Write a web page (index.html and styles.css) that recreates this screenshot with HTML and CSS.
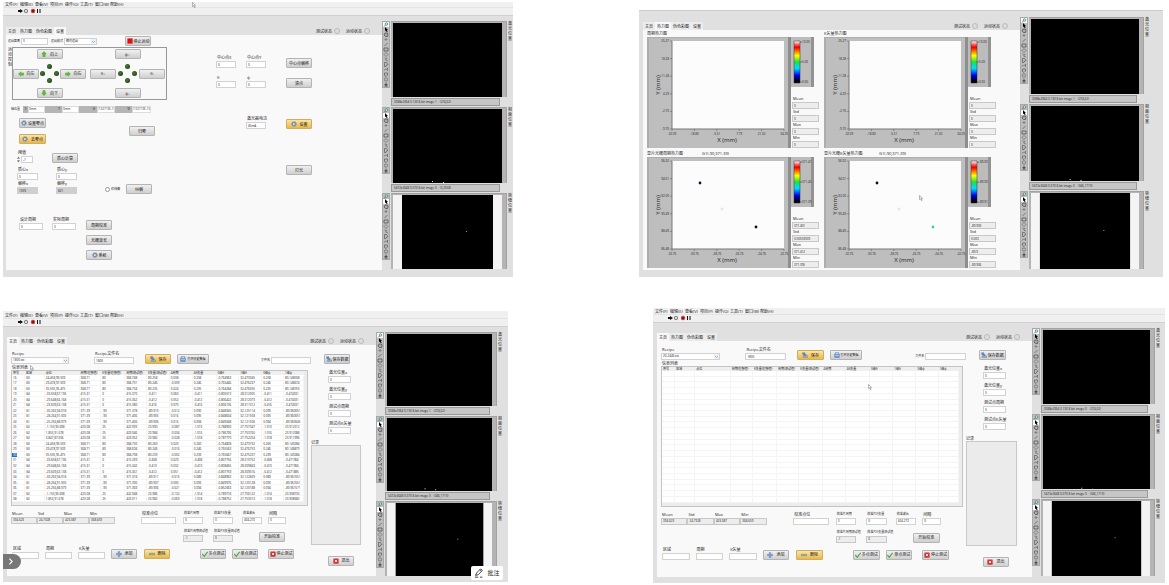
FILE: index.html
```html
<!DOCTYPE html>
<html>
<head>
<meta charset="utf-8">
<title>光栅测试系统</title>
<link rel="stylesheet" href="styles.css">
</head>
<body>
<svg class="sprite" aria-hidden="true">
  <symbol id="i-gear" viewBox="0 0 16 16"><circle cx="8" cy="8" r="5" fill="#dfe6f2" stroke="#5b7099" stroke-width="2.4"/><circle cx="8" cy="8" r="7" fill="none" stroke="#7187ad" stroke-width="1.8" stroke-dasharray="2.2 2.2"/><path d="M8 5v3l2 1" stroke="#5b7099" stroke-width="1.4" fill="none"/></symbol>
  <symbol id="i-up" viewBox="0 0 16 16"><path d="M8 1l6 7h-3v7H5V8H2z" fill="#62bd35" stroke="#3f8f1e"/></symbol>
  <symbol id="i-down" viewBox="0 0 16 16"><path d="M8 15l6-7h-3V1H5v7H2z" fill="#62bd35" stroke="#3f8f1e"/></symbol>
  <symbol id="i-left" viewBox="0 0 16 16"><path d="M1 8l7-6v3h7v6H8v3z" fill="#62bd35" stroke="#4fa02b"/></symbol>
  <symbol id="i-right" viewBox="0 0 16 16"><path d="M15 8L8 2v3H1v6h7v3z" fill="#62bd35" stroke="#4fa02b"/></symbol>
  <symbol id="i-stop" viewBox="0 0 16 16"><path d="M1 1h14v14H1z" fill="#e01010"/></symbol>
  <symbol id="i-save" viewBox="0 0 16 16"><path d="M3 10h12v5H3z" fill="#a9b4c4" stroke="#66748a"/><path d="M1 2l6-1 1 4 4 2-4 5-2-4-4-1z" fill="#4f86d0" stroke="#3a6cae" stroke-width=".6"/></symbol>
  <symbol id="i-open" viewBox="0 0 16 16"><path d="M4 5V1h8v4" fill="#eef3fa" stroke="#4a78b5" stroke-width="1.5"/><path d="M1 5h14l-1 10H2z" fill="#6f9ed8" stroke="#4a78b5"/><path d="M3 9h10" stroke="#dce8f7" stroke-width="1.5"/></symbol>
  <symbol id="i-plus" viewBox="0 0 16 16"><path d="M6 1h4v5h5v4h-5v5H6v-5H1V6h5z" fill="#7ea3d6" stroke="#4d75ae"/></symbol>
  <symbol id="i-minus" viewBox="0 0 16 16"><path d="M0 6h16v4H0z" fill="#86a3bd" stroke="#6d879e"/></symbol>
  <symbol id="i-check" viewBox="0 0 16 16"><path d="M1 8l5 6L15 2" fill="none" stroke="#3faa35" stroke-width="3"/></symbol>
  <symbol id="i-cross" viewBox="0 0 16 16"><rect x="1" y="1" width="14" height="14" rx="1" fill="#d32f2f"/><path d="M5 5l6 6M11 5l-6 6" stroke="#fff" stroke-width="2.2"/></symbol>
  <symbol id="i-cursor" viewBox="0 0 10 16"><path d="M1 1v11l3-2 2 5 2-1-2-5h3z" fill="#fff" stroke="#444"/></symbol>
  <symbol id="t-zoom" viewBox="0 0 10 10"><circle cx="6" cy="4" r="2.6" fill="#cfe9ec" stroke="#27616b" stroke-width="1.2"/><path d="M4 6L1 9" stroke="#27616b" stroke-width="1.6"/></symbol>
  <symbol id="t-point" viewBox="0 0 10 10"><path d="M3 0v8l2-1 1 3h2L7 6h2z" fill="#000"/></symbol>
  <symbol id="t-hand" viewBox="0 0 10 10"><path d="M2 4l1-2h5l1 3-1 4H4L1 6z" fill="#aaa" stroke="#333" stroke-width="1.2"/></symbol>
  <symbol id="t-plus" viewBox="0 0 10 10"><path d="M5 2v6M2 5h6" stroke="#555"/></symbol>
  <symbol id="t-line" viewBox="0 0 10 10"><path d="M2 8l6-6" stroke="#444" stroke-width="1.2"/></symbol>
  <symbol id="t-rect" viewBox="0 0 10 10"><path d="M1 2h8v6H1z" fill="none" stroke="#333" stroke-width="1.2"/></symbol>
  <symbol id="t-diam" viewBox="0 0 10 10"><path d="M5 1l4 4-4 4-4-4z" fill="none" stroke="#444"/></symbol>
  <symbol id="t-poly" viewBox="0 0 10 10"><path d="M2 2l5 1-3 3 5 2" fill="none" stroke="#444"/></symbol>
  <symbol id="t-gon" viewBox="0 0 10 10"><path d="M2 1h4l3 4-3 1-1 3H2z" fill="none" stroke="#333"/></symbol>
  <symbol id="t-free" viewBox="0 0 10 10"><path d="M1 7c2-6 5 2 7-5v6" fill="none" stroke="#444"/></symbol>
  <symbol id="t-blob" viewBox="0 0 10 10"><path d="M2 2h6v4L5 9 2 7z" fill="none" stroke="#333"/></symbol>
  <symbol id="t-ring" viewBox="0 0 10 10"><circle cx="5" cy="5" r="3.3" fill="none" stroke="#444"/></symbol>
  <symbol id="t-fill" viewBox="0 0 10 10"><path d="M5 1v8M2 5h6M2 8h6" stroke="#333" stroke-width="1.4"/></symbol>
</svg>

<template id="menu-tpl">
  <nav class="menubar">
    <a href="#">文件(F)</a><a href="#">编辑(E)</a><a href="#">查看(V)</a><a href="#">项目(P)</a><a href="#">操作(O)</a><a href="#">工具(T)</a><a href="#">窗口(W)</a><a href="#">帮助(H)</a>
  </nav>
  <svg class="runbar" viewBox="0 0 26 6" aria-hidden="true">
    <path d="M0 2h2V1l3 2-3 2V4H0z" fill="#111"/><circle cx="8" cy="3" r="1.7" fill="#ddd" stroke="#555" stroke-width=".7"/><circle cx="15" cy="3" r="2.2" fill="#c4413c"/><path d="M14 2h2v2h-2z" fill="#7b1a17"/><path d="M19.500 1v4M22 1v4" stroke="#111"/>
  </svg>
</template>

<template id="tabs-tpl">
  <button class="tab" type="button">主页</button><button class="tab" type="button">热力图</button><button class="tab" type="button">伪色彩图</button><button class="tab" type="button">设置</button>
  <span class="lamp">测试状态<i></i></span><span class="lamp">运动状态<i></i></span>
</template>

<template id="recipe-tpl">
  <div class="track files">
    <label class="field"><span>Recipe</span><select><option></option></select></label>
    <label class="field"><span>Recipe文件名</span><input value="1800"></label>
    <button class="btn gold" type="button"><svg><use href="#i-save"/></svg>保存</button>
    <button class="btn dense" type="button"><svg><use href="#i-open"/></svg>打开历史数据</button>
    <label class="inline"><span>文件名</span><input></label>
    <button class="btn" type="button"><svg><use href="#i-save"/></svg>保存数据</button>
  </div>
  <div class="recipe-body">
    <div class="recipe-left">
      <span class="list-title">信息列表</span>
      <div class="list"><table><colgroup></colgroup><thead><tr></tr></thead><tbody></tbody></table></div>
      <div class="track results">
        <label class="field ro"><span>Mean</span><input value="394.623" readonly></label>
        <label class="field ro"><span>Std</span><input value="24.7328" readonly></label>
        <label class="field ro"><span>Max</span><input value="423.087" readonly></label>
        <label class="field ro"><span>Min</span><input value="368.659" readonly></label>
        <label class="field"><span>校准点位</span><input></label>
        <label class="field small"><span>校准片周期</span><input value="0"></label>
        <label class="field small"><span>校准片K矢量</span><input value="0"></label>
        <label class="field small"><span>校准波长</span><input value="404.272"></label>
        <label class="field"><span>间隔</span><input value="0"></label>
      </div>
      <div class="track calib">
        <label class="field ro small"><span>校准片周期测试值</span><input value="-1" readonly></label>
        <label class="field ro small"><span>校准片K矢量测试值</span><input value="0" readonly></label>
        <button class="btn" type="button">开始校准</button>
      </div>
      <div class="track actions">
        <label class="field"><span>区域</span><input></label>
        <label class="field"><span>周期</span><input></label>
        <label class="field"><span>K矢量</span><input></label>
        <button class="btn" type="button"><svg><use href="#i-plus"/></svg>添加</button>
        <button class="btn gold" type="button"><svg><use href="#i-minus"/></svg>删除</button>
        <button class="btn" type="button"><svg><use href="#i-check"/></svg>多点测试</button>
        <button class="btn" type="button"><svg><use href="#i-check"/></svg>单点测试</button>
        <button class="btn" type="button"><svg><use href="#i-cross"/></svg>停止测试</button>
      </div>
    </div>
    <div class="recipe-right">
      <label class="field"><span>激光位置x</span><input value="0"></label>
      <label class="field"><span>激光位置y</span><input value="0"></label>
      <label class="field"><span>测试点周期</span><input value="0"></label>
      <label class="field"><span>测试点K矢量</span><input value="0"></label>
      <label class="log"><span>记录</span><textarea readonly></textarea></label>
      <button class="btn" type="button"><svg><use href="#i-cross"/></svg>退出</button>
    </div>
  </div>
</template>

<main class="board">
  <div class="row row-top">
    <section class="panel p-setup">
      <header class="chrome" data-menu></header>
      <div class="work">
        <div class="tabbar" data-active="3"></div>
        <div class="page setup">
          <div class="setup-left">
            <div class="track s-move">
              <label class="inline"><span>运动距离</span><input value="0"></label>
              <label class="inline"><span>运动模式</span><select><option>相对运动</option></select></label>
              <button class="btn" type="button"><svg><use href="#i-stop"/></svg>停止运动</button>
            </div>
            <div class="track s-pad">
              <span class="vertical">运动控制</span>
              <div class="pads">
                <div class="pad">
                  <button class="btn n" type="button"><svg><use href="#i-up"/></svg>向上</button>
                  <button class="btn w" type="button"><svg><use href="#i-left"/></svg>向左</button>
                  <span class="leds"><i></i><i></i><i></i><i></i></span>
                  <button class="btn e" type="button"><svg><use href="#i-right"/></svg>向右</button>
                  <button class="btn s" type="button"><svg><use href="#i-down"/></svg>向下</button>
                </div>
                <div class="pad">
                  <button class="btn n" type="button">ψ+</button>
                  <button class="btn w" type="button">θ+</button>
                  <span class="leds"><i></i><i></i><i></i><i></i></span>
                  <button class="btn e" type="button">θ-</button>
                  <button class="btn s" type="button">ψ-</button>
                </div>
              </div>
            </div>
            <div class="axes">
              <span>轴位置</span><b class="first">X</b><output>0mm</output><b>Y</b><output>0mm</output><b>Θ</b><output>7.02713E-15</output><b>Ψ</b><output>7.02713E-15</output>
            </div>
            <div class="track s-zero">
              <div class="stack">
                <button class="btn" type="button"><svg><use href="#i-gear"/></svg>设置零点</button>
                <button class="btn gold" type="button"><svg><use href="#i-gear"/></svg>去零点</button>
              </div>
              <button class="btn" type="button">归零</button>
            </div>
            <div class="track s-thr">
              <label class="field"><span>阈值</span><i class="spin"><svg viewBox="0 0 4 8"><path d="M0 3l2-3 2 3zM0 5l2 3 2-3z" fill="#777"/></svg><input value="-1"></i></label>
              <button class="btn" type="button">质心计算</button>
            </div>
            <div class="track s-cent">
              <div><label class="field"><span>质心x</span><input value="0"></label><label class="field dark"><span>偏移x</span><input value="1359" readonly></label></div>
              <div><label class="field"><span>质心y</span><input value="0"></label><label class="field dark"><span>偏移y</span><input value="821" readonly></label></div>
              <label class="radio"><input type="radio">仿线偏</label>
              <button class="btn" type="button">纠偏</button>
            </div>
            <div class="track s-period">
              <label class="field"><span>设计周期</span><input value="0"></label>
              <label class="field"><span>实际周期</span><input value="0"></label>
              <div class="stack">
                <button class="btn" type="button">周期校准</button>
                <button class="btn" type="button">光栅波长</button>
                <button class="btn" type="button"><svg><use href="#i-gear"/></svg>系统</button>
              </div>
            </div>
          </div>
          <div class="setup-right">
            <div class="track">
              <label class="field"><span>中心点X</span><input value="0"></label>
              <label class="field"><span>中心点Y</span><input value="0"></label>
              <button class="btn" type="button">中心点偏移</button>
            </div>
            <div class="track">
              <label class="field"><span>θ</span><input value="0"></label>
              <label class="field"><span>ψ</span><input value="0"></label>
              <button class="btn" type="button">清点</button>
            </div>
            <div class="track laser">
              <label class="field"><span>激光器电流</span><input value="45mA"></label>
              <button class="btn gold" type="button"><svg><use href="#i-gear"/></svg>设置</button>
            </div>
            <div class="track light"><button class="btn" type="button">灯光</button></div>
          </div>
        </div>
      </div>
      <aside class="cams" data-status="3088x2064 0.13X 8-bit image 1    (274,62)|5472x3648 0.07X 8-bit image 0    (0,2358)"></aside>
      <svg class="cursor"><use href="#i-cursor"/></svg>
    </section>

    <section class="panel p-heat">
      <div class="work">
        <div class="tabbar" data-active="1"></div>
        <div class="page heat"></div>
      </div>
      <aside class="cams" data-status="3088x2064 0.13X 8-bit image 1    (274,62)|5472x3648 0.07X 8-bit image 0    (346,1719)"></aside>
      <svg class="cursor"><use href="#i-cursor"/></svg>
    </section>
  </div>

  <div class="row row-bottom">
    <section class="panel p-full">
      <header class="chrome" data-menu></header>
      <div class="work">
        <div class="tabbar" data-active="0"></div>
        <div class="page recipe" data-recipe="1800.txt" data-rows="full"></div>
      </div>
      <aside class="cams" data-status="3088x2064 0.13X 8-bit image 1    (274,62)|5472x3648 0.07X 8-bit image 0    (346,1719)"></aside>
      <svg class="cursor"><use href="#i-cursor"/></svg>
      <button class="expand" type="button" aria-label="展开"><svg viewBox="0 0 8 8"><path d="M3 1.500l2.500 2.500L3 6.500" fill="none" stroke="#fff"/></svg></button>
      <button class="note" type="button"><svg viewBox="0 0 12 12"><path d="M2 9l1-3 5-5 2 2-5 5zM7 2l2 2M1 11h4M7 11h3" fill="none" stroke="#222"/></svg>批注</button>
    </section>

    <section class="panel p-empty">
      <header class="chrome" data-menu></header>
      <div class="work">
        <div class="tabbar" data-active="0"></div>
        <div class="page recipe" data-recipe="20-2440.txt" data-rows="none"></div>
      </div>
      <aside class="cams" data-status="3088x2064 0.13X 8-bit image 0    (274,62)|5472x3648 0.07X 8-bit image 0    (346,1719)"></aside>
      <svg class="cursor"><use href="#i-cursor"/></svg>
    </section>
  </div>
</main>
<script src="script.js"></script>
</body>
</html>
```
FILE: styles.css
```css
* { box-sizing: border-box; }
body {
  margin: 0;
  background: #fff;
  color: #222;
  font: 4px/5px "Open Sans", "Noto Sans CJK SC", sans-serif;
}
.sprite { position: absolute; width: 0; height: 0; }
button, input, select, textarea {
  margin: 0;
  font: inherit;
  color: inherit;
  border-radius: 0;
  appearance: none;
}
a { color: inherit; text-decoration: none; }

/* board */
.board { display: grid; min-height: 100vh; grid-template-rows: 307fr 278fr; }
.row { display: grid; }
.row-top { grid-template-columns: 510fr 126fr 524fr; padding: 2px 6px 31px 3px; }
.row-bottom { grid-template-columns: 505fr 145fr 512fr; padding: 0 4px 4px 3px; }
.panel {
  position: relative;
  display: grid;
  background: #e0e0e0;
  grid-template-rows: auto 1fr;
  min-width: 0;
}
.panel:last-child { grid-column: 3; }
.p-setup { grid-template-columns: minmax(0, 379fr) minmax(0, 131fr); }
.p-heat { grid-template-columns: minmax(0, 381fr) minmax(0, 143fr); grid-template-rows: 1fr; margin-top: 8px; border-top: 1px solid #c8cccc; }
.p-full { grid-template-columns: minmax(0, 373fr) minmax(0, 132fr); margin: 3px 0 1px; }
.p-empty { grid-template-columns: minmax(0, 379fr) minmax(0, 133fr); }

.chrome {
  grid-column: 1 / 3;
  background: #f0f0f0;
  border-bottom: 1px solid #d0d0d0;
  height: 14px;
}
.p-full .chrome { height: 16px; padding-top: 2px; }
.p-empty .chrome { height: 15px; padding-top: 1px; }
.menubar { display: flex; gap: 2px; padding-left: 2px; height: 6px; border-bottom: 1px solid #e4e4e4; }
.menubar a { width: 13px; white-space: nowrap; }
.runbar { display: block; width: 26px; height: 6px; margin-left: 15px; }

.work { display: flex; flex-direction: column; padding: 0 0 7px 3px; }
.p-heat .work, .p-full .work, .p-empty .work { padding-left: 4px; }
.p-full .work, .p-empty .work { padding-bottom: 6px; }
.tabbar { display: flex; align-items: flex-end; height: 19px; padding-right: 12px; }
.p-full .tabbar, .p-empty .tabbar { height: 18px; }
.tab { height: 8px; padding: 0 2px; border: 0; background: #ececec; white-space: nowrap; }
.tab.on { background: #f9f9f9; }
.lamp { display: flex; align-items: center; gap: 2px; height: 8px; margin-left: 6px; white-space: nowrap; }
.tab + .lamp { margin-left: auto; }
.lamp i { width: 6px; height: 6px; border: 1px solid #bbb; border-radius: 50%; background: #ddd; }
.page { flex: 1; background: #f9f9f9; }

/* tracks: even columns hold items, odd columns are the gaps */
.track { display: grid; align-items: end; }
.track > * { grid-row: 1; min-width: 0; }
.track > :nth-child(1) { grid-column: 2; }
.track > :nth-child(2) { grid-column: 4; }
.track > :nth-child(3) { grid-column: 6; }
.track > :nth-child(4) { grid-column: 8; }
.track > :nth-child(5) { grid-column: 10; }
.track > :nth-child(6) { grid-column: 12; }
.track > :nth-child(7) { grid-column: 14; }
.track > :nth-child(8) { grid-column: 16; }
.track > :nth-child(9) { grid-column: 18; }

/* controls */
.field { display: block; white-space: nowrap; }
.field span { display: block; height: 6px; padding-left: 1px; }
.small span { font-size: 3px; }
input, select {
  display: block;
  width: 100%;
  min-width: 0;
  height: 7px;
  padding: 0 1px;
  border: 1px solid #d2d2d2;
  background: #fff;
  color: #111;
  font-size: 3px;
  line-height: 5px;
}
.ro input { background: #ededed; border-color: #c8c8c8; }
.dark input { background: #cfcfcf; border-color: #cfcfcf; }
.inline { display: flex; align-items: center; gap: 1px; white-space: nowrap; font-size: 3px; }
.inline input, .inline select { flex: 1; }
.spin { display: flex; align-items: center; gap: 1px; }
.spin svg { width: 3px; height: 7px; flex: none; }
select {
  background: #fff url("data:image/svg+xml,%3Csvg xmlns='http://www.w3.org/2000/svg' viewBox='0 0 5 5'%3E%3Cpath d='M0 0h5v5H0z' fill='%23eaf1f7'/%3E%3Cpath d='M1 2l1.500 1.500L4 2' fill='none' stroke='%23789' stroke-width='.6'/%3E%3C/svg%3E") no-repeat right center / 5px 5px;
}
.btn {
  display: flex;
  align-items: center;
  justify-content: center;
  gap: 1px;
  height: 10px;
  width: 100%;
  padding: 0;
  border: 1px solid #b4b4b4;
  border-radius: 1px;
  background: linear-gradient(#f0f0f0, #cfcfcf);
  white-space: nowrap;
  color: #111;
}
.btn svg { width: 6px; height: 6px; flex: none; }
.actions .btn:nth-child(-n+5), .pad .btn, .gold, .recipe-right .btn { gap: 3px; }
.dense { font-size: 3px; }
.gold { background: linear-gradient(#fbe4a4, #e6b94d); border-color: #cfae62; }
.vertical { width: 4px; line-height: 5px; word-break: break-all; align-self: start; }
.stack { display: grid; gap: 6px; }

/* setup page */
.setup { display: grid; grid-template-columns: minmax(0, 207fr) minmax(0, 169fr); }
.s-move { grid-template-columns: 2fr 40fr 3fr 46fr 28fr 26fr 62fr; padding-top: 1px; align-items: center; }
.s-pad { grid-template-columns: 2fr 4fr 0fr 155fr 46fr; margin-top: 1px; }
.pads { display: grid; grid-template-columns: 73px 75px; justify-content: space-between; padding: 1px 1px 1px 0; border: 1px solid #999; height: 53px; align-content: center; }
.pad { display: grid; grid-template-columns: 26px 1fr 26px; grid-template-rows: 10px 29px 10px; align-items: center; }
.pad .n { grid-area: 1 / 1 / 2 / 4; }
.pad .s { grid-area: 3 / 1 / 4 / 4; }
.pad .n, .pad .s { width: 26px; justify-self: center; }
.pad .w { grid-area: 2 / 1; }
.pad .e { grid-area: 2 / 3; }
.leds { grid-area: 2 / 2; justify-self: center; display: grid; grid-template: repeat(3, 5px) / repeat(3, 5px); gap: 2px; }
.leds i { border-radius: 50%; background: radial-gradient(circle at 2px 2px, #4a7a3a, #123008); }
.leds i:nth-child(1) { grid-area: 1 / 2; }
.leds i:nth-child(2) { grid-area: 2 / 1; }
.leds i:nth-child(3) { grid-area: 2 / 3; }
.leds i:nth-child(4) { grid-area: 3 / 2; }
.axes { display: grid; grid-template-columns: 12fr 5fr 17fr 17fr 17fr 18fr 18fr 17fr 19fr; margin: 6px 62px 0 5px; font-size: 3px; line-height: 7px; white-space: nowrap; }
.axes > * { min-width: 0; }
.axes b { background: #b5b5b5; text-align: right; padding-right: 2px; font-weight: 400; }
.axes .first { text-align: center; padding: 0; }
.axes output { background: #fff; border: 1px solid #ddd; line-height: 5px; overflow: hidden; }
.s-zero { grid-template-columns: 13fr 27fr 83fr 26fr 58fr; margin-top: 5px; align-items: center; }
.s-thr { grid-template-columns: 11fr 16fr 19fr 26fr 135fr; margin-top: 6px; }
.s-cent { grid-template-columns: 11fr 21fr 18fr 21fr 28fr 17fr 4fr 26fr 61fr; margin-top: 4px; }
.s-cent .field + .field { margin-top: 1px; }
.radio { display: flex; align-items: center; gap: 1px; font-size: 3px; height: 10px; white-space: nowrap; }
.radio input { flex: none; width: 5px; height: 5px; padding: 0; border: 1px solid #999; border-radius: 50%; }
.s-period { grid-template-columns: 13fr 24fr 9fr 24fr 10fr 26fr 101fr; margin-top: 23px; align-items: start; }
.s-period .stack { margin-top: 3px; gap: 5px; }
.setup-right .track { grid-template-columns: 3fr 20fr 10fr 20fr 20fr 26fr 70fr; margin-top: 7px; }
.setup-right .track:first-child { margin-top: 20px; }
.setup-right .laser { margin-top: 28px; }
.setup-right .laser > :nth-child(1) { grid-column: 4; }
.setup-right .laser > :nth-child(2), .setup-right .light > * { grid-column: 6; }
.setup-right .light { margin-top: 36px; }

/* heat maps */
.heat { display: grid; align-content: space-between; padding: 1px 0 2px; }
.heat .track { grid-template-columns: 4fr 144fr 0fr 29fr 0fr 4fr 0fr 144fr 0fr 29fr 23fr; align-items: stretch; }
.heat .track > :nth-child(3) { grid-column: 8; }
.heat .track > :nth-child(4) { grid-column: 10; }
.plot { display: flex; flex-direction: column; }
.plot p { display: grid; grid-template-columns: 55fr 89fr; margin: 0; height: 6px; white-space: nowrap; }
.plot p span { min-width: 0; }
.plot svg, .scale svg { display: block; width: 100%; }
svg text { fill: #222; font-size: 3px; }
svg .axis { font-size: 6px; }
.scale { display: flex; flex-direction: column; padding-top: 6px; }
.scale svg { width: 23px; height: 50px; }
.scale .values { margin-top: auto; padding: 0 1px; }

/* recipe page */
.recipe { display: flex; flex-direction: column; }
.files { grid-template-columns: 4fr 58fr 25fr 40fr 11fr 26fr 6fr 32fr 52fr 50fr 13fr 26fr 26fr; padding-top: 4px; height: 19px; }
.recipe-body { flex: 1; display: grid; grid-template-columns: minmax(0, 304fr) minmax(0, 65fr); }
.recipe-left { display: flex; flex-direction: column; padding-bottom: 17px; }
.list-title { height: 6px; padding: 1px 0 0 5px; }
.list { flex: 1; display: grid; margin: 0 3px 0 4px; padding: 0 3px 3px 0; border: 1px solid #c4c4c4; background: #ececec; }
.list table { width: 100%; height: 100%; table-layout: fixed; border-collapse: collapse; background: #fff; font-size: 3px; line-height: 4px; }
.list th, .list td { padding: 0 0 0 1px; text-align: left; white-space: nowrap; font-weight: 400; height: 4px; }
.list th { background: #efefef; color: #111; }
.list td { box-shadow: inset -1px -1px #f4f4f4; }
.list mark { display: block; width: 5px; margin-left: -1px; padding-left: 1px; background: #1f6fc0; color: #fff; }
.results { grid-template-columns: 4fr 26fr 0fr 26fr 0fr 26fr 0fr 26fr 26fr 35fr 7fr 20fr 10fr 20fr 9fr 20fr 6fr 18fr 25fr; margin-top: 5px; }
.calib { grid-template-columns: 176fr 20fr 10fr 20fr 26fr 26fr 26fr; margin-top: 5px; }
.actions { grid-template-columns: 5fr 27fr 6fr 27fr 6fr 27fr 6fr 26fr 7fr 26fr 30fr 26fr 6fr 26fr 10fr 26fr 17fr; margin-top: 4px; }
.recipe-right { display: flex; flex-direction: column; padding: 6px 0 10px; }
.recipe-right .field { width: 23px; margin: 0 0 4px 17px; }
.log { flex: 1; display: flex; flex-direction: column; margin: 2px 15px 11px 0; }
.log textarea { flex: 1; width: 100%; min-height: 0; padding: 0; border: 1px solid #c8c8c8; background: #ebebeb; resize: none; }
.recipe-right .btn { width: 26px; margin-left: 17px; }

/* camera column */
.cams { display: flex; flex-direction: column; padding: 5px 1px 8px 0; }
.p-heat .cams { padding: 6px 14px 8px 0; }
.p-full .cams { padding: 5px 6px 6px 0; }
.p-empty .cams { padding: 5px 5px 7px 0; }
.cam { flex: 1 1 9px; display: grid; grid-template-columns: 8px minmax(0, 1fr) 4px; grid-template-rows: minmax(0, 1fr) auto; column-gap: 1px; }
.cam:last-child { flex-basis: 0; }
.tools { grid-row: 1 / 3; align-self: start; background: #bdbdbd; display: grid; border: 1px solid #a8a8a8; }
.tools button { display: block; width: 6px; height: 5px; padding: 0; border: 0; background: none; }
.tools button.on { background: #fff; }
.tools svg { display: block; width: 6px; height: 5px; }
.view { background: #b4b4b4; padding: 1px 4px 0 2px; border: 1px solid #a2a2a2; border-width: 1px 1px 0 0; min-height: 0; }
.view svg { display: block; width: 100%; height: 100%; background: #000; }
.view.wide svg { background: #f4f4f4; }
.status { grid-column: 2; height: 8px; margin: 1px 7px 1px 0; padding-left: 2px; border: 1px solid #999; background: #c6c6c6; font-size: 3px; line-height: 6px; white-space: pre; overflow: hidden; }
.cam .vertical { grid-area: 1 / 3; }

/* overlays */
.cursor { position: absolute; width: 4px; height: 6px; }
.p-setup .cursor { left: 37%; top: 0; }
.p-heat .cursor { left: 53.500%; top: 69%; }
.p-full .cursor { left: 5.300%; top: 20%; }
.p-empty .cursor { left: 42%; top: 27.500%; }
.expand { position: absolute; left: 0; bottom: 13px; width: 18px; height: 15px; padding: 3px; border: 0; border-radius: 0 8px 8px 0; background: #777; }
.expand svg { display: block; width: 9px; height: 9px; }
.note { position: absolute; right: 5px; bottom: 2px; display: flex; align-items: center; justify-content: center; gap: 3px; width: 32px; height: 14px; padding: 0; border: 0; border-radius: 2px; background: #fff; font-size: 6px; line-height: 8px; white-space: nowrap; color: #222; }
.note svg { width: 10px; height: 10px; }
```
FILE: script.js
```js
const all = (sel, root = document) => [...root.querySelectorAll(sel)];
const clone = id => document.getElementById(id).content.cloneNode(true);

all('[data-menu]').forEach(el => el.append(clone('menu-tpl')));
all('.tabbar').forEach(el => {
  el.append(clone('tabs-tpl'));
  all('.tab', el)[el.dataset.active].classList.add('on');
});

/* camera columns */
const tools = ['zoom', 'point', 'hand', 'plus', 'line', 'rect', 'diam', 'poly', 'gon', 'free', 'blob', 'ring', 'fill'];
const names = ['激光位置', '相面位置', '狭缝位置'];
const scenes = [
  '',
  '<path d="M39 72h1v1h-1zM50 73h1v1h-1z" fill="#ddd"/>',
  '<path d="M9 0h91v76H9z"/><path d="M73 36h1v1h-1z" fill="#999"/>'
];
all('.cams').forEach(el => {
  const status = el.dataset.status.split('|');
  el.innerHTML = names.map((name, i) => `
    <div class="cam">
      <div class="tools">${tools.map((t, k) => `<button type="button" aria-label="${t}"${k === (i ? 1 : 0) ? ' class="on"' : ''}><svg><use href="#t-${t}"/></svg></button>`).join('')}</div>
      <div class="view${i === 2 ? ' wide' : ''}"><svg viewBox="0 0 109 74" preserveAspectRatio="none">${scenes[i]}</svg></div>
      <span class="vertical">${name}</span>
      ${status[i] ? `<div class="status">${status[i]}</div>` : ''}
    </div>`).join('');
});

/* heat maps */
const topX = ['-32.09', '-18.80', '-5.51', '7.79', '21.02', '34.29'];
const topY = ['25.27', '18.28', '11.28', '4.29', '-2.70', '-9.70'];
const lowX = ['-32.76', '-30.76', '-28.76', '-26.76', '-24.76', '-22.76'];
const lowY = ['96.02', '94.01', '92.00', '90.49', '88.49', '86.48'];
const plot = (title, sub, xs, ys, dots) => `
  <div class="plot"><p><span>${title}</span><span>${sub}</span></p>
  <svg viewBox="0 0 144 111">
    <path d="M0 0h144v111H0z" fill="#bebebe"/><path d="M0 0h144v1H0zM0 0h2v111H0z" fill="#adadad"/><path d="M141 0h3v111h-3z" fill="#8e8e8e"/>
    <path d="M25 4h112v88H25z" fill="#fcfcfc"/><path d="M25 92h112M25 4v88" stroke="#777" fill="none"/>
    ${ys.map((t, i) => `<path d="M23 ${4 + i * 17.6}h2" stroke="#555" stroke-width=".5"/><text x="22" y="${5 + i * 17.6}" text-anchor="end">${t}</text>`).join('')}
    ${xs.map((t, i) => `<path d="M${25 + i * 22.4} 92v2" stroke="#555" stroke-width=".5"/><text x="${25 + i * 22.4}" y="97.500" text-anchor="middle">${t}</text>`).join('')}
    <text class="axis" x="80" y="105" text-anchor="middle">X (mm)</text>
    <text class="axis" transform="translate(13 48) rotate(-90)" text-anchor="middle">Y (mm)</text>
    ${dots.map(d => `<circle cx="${d[0]}" cy="${d[1]}" r="1.400" fill="${d[2]}"/>`).join('')}
  </svg></div>`;
const scale = (marks, values) => `
  <div class="scale"><svg viewBox="0 0 23 50">
    <defs><linearGradient id="ramp" x2="0" y2="1"><stop offset="0" stop-color="#fff"/><stop offset=".08" stop-color="#f66"/><stop offset=".15" stop-color="#e00"/><stop offset=".35" stop-color="#ff0"/><stop offset=".5" stop-color="#2d4"/><stop offset=".65" stop-color="#0df"/><stop offset=".82" stop-color="#00e"/><stop offset=".95" stop-color="#000"/></linearGradient></defs>
    <path d="M0 0h23v50H0z" fill="#bcbcbc"/><path d="M20 0h3v50h-3z" fill="#929292"/>
    <path d="M3 4h6v42H3z" fill="url(#ramp)" stroke="#333" stroke-width=".5"/>
    ${marks.map((m, i) => `<path d="M9 ${5 + i * 20}h2" stroke="#333" stroke-width=".5"/><text x="11" y="${6 + i * 20}">${m}</text>`).join('')}
  </svg><div class="values">${['Mean', 'Std', 'Max', 'Min'].map((n, i) => `<label class="field ro"><span>${n}</span><input value="${values[i]}" readonly></label>`).join('')}</div></div>`;
const zero = [0, 0, 0, 0];
document.querySelector('.heat').innerHTML =
  '<div class="track">' +
  plot('周期热力图', '', topX, topY, []) + scale(['10.00', '5.00', '0.00'], zero) +
  plot('K矢量热力图', '', topX, topY, []) + scale(['10.00', '5.00', '0.00'], zero) +
  '</div><div class="track">' +
  plot('显片光栅周期热力图', 'G1(-90,371.39)', lowX, lowY, [[53, 26, '#114'], [75, 52, '#fbdcdc'], [109, 70, '#111']]) +
  scale(['371.41', '371.40', '371.39'], ['371.401', '0.00553939', '371.412', '371.395']) +
  plot('显片光栅K矢量热力图', 'G1(-90,371.39)', lowX, lowY, [[53, 26, '#111'], [75, 52, '#fbdcdc'], [109, 70, '#2fdc8c']]) +
  scale(['-89.90', '-89.90', '-89.91'], ['-89.903', '0.003', '-89.9', '-89.906']) +
  '</div>';

/* recipe pages */
const heads = ['序号', '区域', '点位', '周期(理想值)', 'K矢量(理想值)', '周期(测试值)', 'K矢量(测试值)', 'Δ周期', 'ΔK矢量', '0级θ', '1级θ', '0级ψ', '1级ψ'];
const widths = [13, 20, 35, 22, 24, 22, 23, 23, 24, 23, 23, 22, 20];
const rows = `16 G3 24.458,99.539 368.71 80 368.748 80.258 0.038 0.258 -0.764963 32.473045 0.258 80.148508
17 G3 29.478,97.509 368.71 80 368.701 80.246 -0.009 0.246 -0.765446 32.476237 0.246 80.148674
18 G3 35.505,95.475 368.71 80 368.734 80.235 0.024 0.235 -0.764284 32.476055 0.235 80.148750
19 G4 -33.658,67.196 415.31 0 415.370 -0.411 0.060 -0.411 -0.805013 28.312005 -0.411 -0.474331
20 G4 -29.648,66.168 415.31 0 415.362 -0.412 0.052 -0.412 -0.806422 28.312073 -0.412 -0.474331
21 G4 -23.609,63.138 415.31 0 415.380 -0.416 0.070 -0.416 -0.806106 28.311012 -0.416 -0.474331
22 G1 -30.263,94.018 371.39 -90 371.378 -89.910 -0.012 0.090 -0.848345 32.125114 0.090 -89.960051
23 G1 -28.264,91.000 371.39 -90 371.406 -89.905 0.016 0.095 -0.848604 32.121558 0.095 -89.960051
24 G1 -25.256,88.979 371.39 -90 371.406 -89.906 0.016 0.094 -0.849348 32.121506 0.094 -89.960045
25 G2 -1.150,93.698 423.08 25 422.993 23.990 -0.087 -1.010 -0.788900 27.757347 -1.010 23.912012
26 G2 1.853,91.678 423.08 25 423.046 23.984 -0.034 -1.016 -0.786706 27.753760 -1.016 23.912088
27 G2 3.847,87.656 423.08 25 423.052 23.982 -0.028 -1.018 -0.787770 27.752254 -1.018 23.911996
28 G3 24.458,99.539 368.71 80 368.730 80.260 0.020 0.260 -0.764828 32.473732 0.260 80.149284
29 G3 29.478,97.509 368.71 80 368.694 80.246 -0.016 0.246 -0.765563 32.476753 0.246 80.148879
30 G3 35.505,95.475 368.71 80 368.708 80.239 -0.002 0.239 -0.765667 32.475237 0.239 80.149284
31 G4 -33.658,67.196 415.31 0 415.339 -0.408 0.029 -0.408 -0.807756 28.310752 -0.408 -0.471966
32 G4 -29.648,66.168 415.31 0 415.342 -0.410 0.032 -0.410 -0.808456 28.309843 -0.410 -0.471966
33 G4 -23.609,63.138 415.31 0 415.361 -0.412 0.051 -0.412 -0.807759 28.309016 -0.412 -0.471885
34 G1 -30.263,94.018 371.39 -90 371.374 -89.911 -0.016 0.089 -0.848963 32.122829 0.089 -89.961651
35 G1 -28.264,91.000 371.39 -90 371.390 -89.907 0.000 0.093 -0.849976 32.120128 0.093 -89.961651
36 G1 -25.256,88.979 371.39 -90 371.369 -89.906 -0.021 0.094 -0.852063 32.120188 0.094 -89.961571
37 G2 -1.150,93.698 423.08 25 422.948 23.986 -0.132 -1.014 -0.789774 27.756122 -1.014 23.908733
38 G2 1.853,91.678 423.08 25 423.011 23.982 -0.069 -1.018 -0.788752 27.753013 -1.018 23.908682`.split('\n').map(r => r.split(' '));
const total = widths.reduce((a, b) => a + b);

all('.recipe').forEach(el => {
  el.append(clone('recipe-tpl'));
  el.querySelector('option').textContent = el.dataset.recipe;
  el.querySelector('colgroup').innerHTML = widths.map(w => `<col style="width:${w / total * 100}%">`).join('');
  el.querySelector('thead tr').innerHTML = heads.map(h => `<th>${h}</th>`).join('');
  const full = el.dataset.rows === 'full';
  const cell = (c, i) => !full ? '' : c === '30' && i === 0 ? `<mark>${c}</mark>` : c;
  el.querySelector('tbody').innerHTML = rows.map(r =>
    `<tr>${r.map((c, i) => `<td>${cell(c, i)}</td>`).join('')}</tr>`).join('');
});
```
